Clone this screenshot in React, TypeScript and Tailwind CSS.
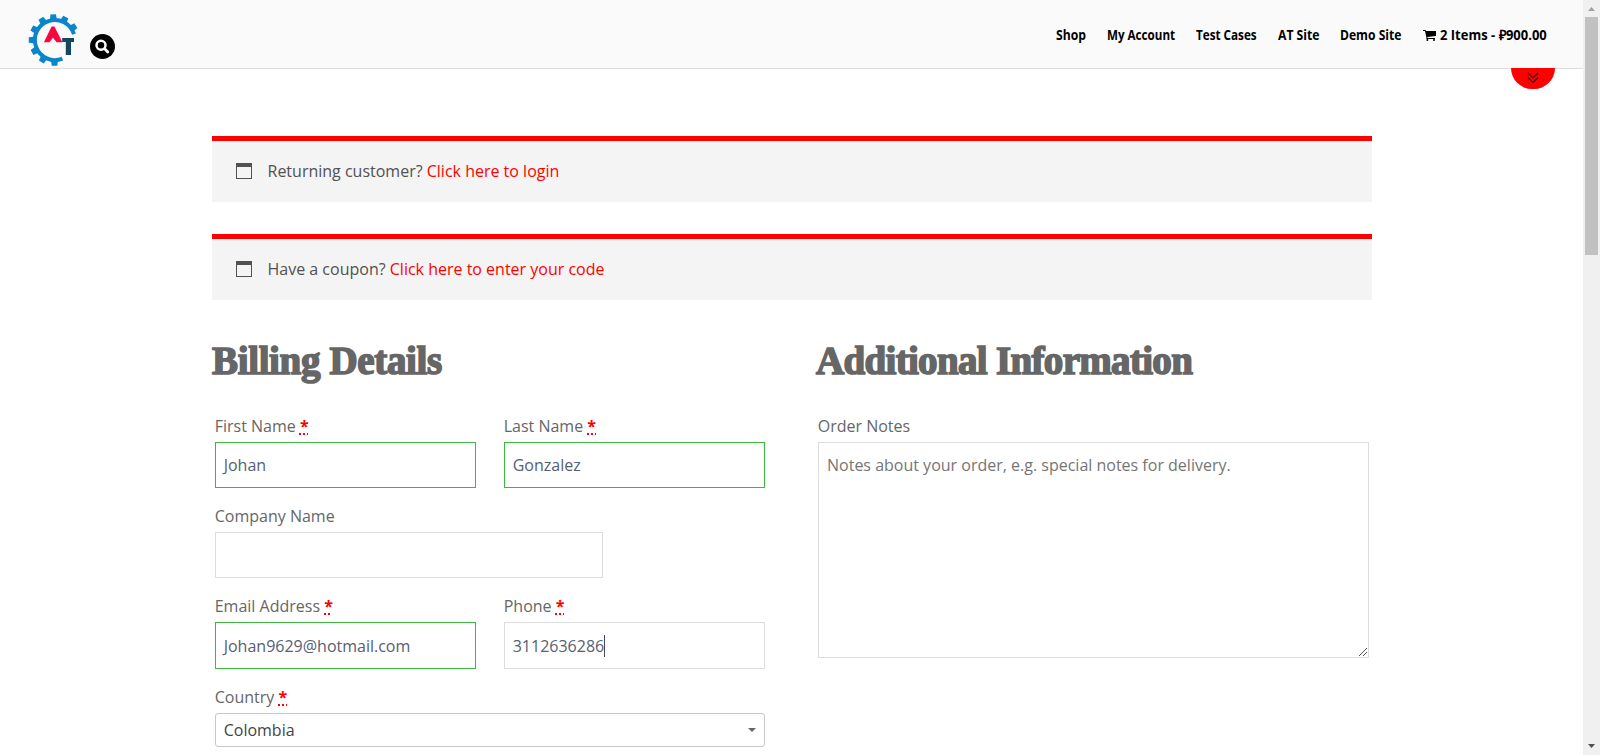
import type { ReactNode } from "react";

const teeth = [-93, -64, -34, 90, 121, 151, 180, 208, 238];

function Logo() {
  return (
    <svg className="h-[50px] w-[50px] shrink-0 overflow-visible" viewBox="0 0 50 50">
      <g fill="#0a85cb">
        {teeth.map((a) => (
          <path key={a} d="M44.5 21.4 L51.2 22.2 V27.8 L44.5 28.6 Z" transform={`rotate(${a} 25.5 25)`} />
        ))}
      </g>
      <path d="M45 19.2 A20 20 0 1 0 33.4 43.6" fill="none" stroke="#0a85cb" strokeWidth="4" />
      <path d="M22.6 11.5 H25.4 L33.4 27.3 H27.6 L24 22.8 L20.4 27.3 H14.9 Z" fill="#f8063f" />
      <path d="M33.2 23 H45 V27 H42 V40 H36.8 V27 H33.2 Z" fill="#12475f" />
    </svg>
  );
}

function NavItem({ box, scale = "scale-x-[0.87]", children }: { box: string; scale?: string; children: ReactNode }) {
  return (
    <a className={`block h-5 shrink-0 whitespace-nowrap ${box}`}>
      <span className={`inline-block origin-left ${scale}`}>{children}</span>
    </a>
  );
}

function Notice({ text, link }: { text: string; link: string }) {
  return (
    <div className="flex h-[66px] items-center border-t-[5px] border-[#ff0000] bg-[#f4f4f4] pb-0.5 pl-[23.5px] text-[#515151]">
      <svg className="mr-4 h-4 w-4 shrink-0" viewBox="0 0 16 16" shapeRendering="crispEdges">
        <path d="M0 0H16V16H0ZM1 4V15H15V4Z" fill="#515151" fillRule="evenodd" />
      </svg>
      <span>
        {text} <a className="text-[#ff0000]">{link}</a>
      </span>
    </div>
  );
}

function Label({ text, required }: { text: string; required?: boolean }) {
  return (
    <div className="-ml-[0.3px] mb-1 h-6 whitespace-nowrap leading-6">
      {text}
      {required && (
        <>
          {" "}
          <abbr className="font-bold text-[#ff0000] underline decoration-dotted decoration-2 underline-offset-auto">*</abbr>
        </>
      )}
    </div>
  );
}

function Field({ label, value, required, valid, caret, size = "h-[46px] w-[261px]" }: {
  label: string;
  value?: string;
  required?: boolean;
  valid?: boolean;
  caret?: boolean;
  size?: string;
}) {
  return (
    <div>
      <Label text={label} required={required} />
      <div className={`flex items-center border pl-[7.7px] text-[#566073] ${size} ${valid ? "border-[#3cb93c]" : "border-[#dddddd]"}`}>
        {value}
        {caret && <span className="h-[22px] w-px bg-[#3f4a5c]" />}
      </div>
    </div>
  );
}

const heading =
  "h-12 whitespace-nowrap font-['Liberation_Serif',serif] text-[39px] font-bold leading-[46px] text-[#666666] [-webkit-text-stroke:1.6px_#666666]";

export default function App() {
  return (
    <div className="flex h-[755px] w-[1600px] overflow-hidden bg-white font-['Open_Sans',sans-serif] text-base leading-6 text-[#666666]">
      <div className="relative flex w-[1583px] shrink-0 flex-col">
        <header className="flex h-[69px] shrink-0 border-b border-[#dedede] bg-[#fafafa] pl-[29px]">
          <div className="pt-[15px]">
            <Logo />
          </div>
          <div className="ml-[11px] mt-[34px] flex h-[25px] w-[25px] items-center justify-center rounded-full bg-black">
            <svg className="h-[15px] w-[15px]" viewBox="0 0 15 15" fill="none" stroke="#fff">
              <circle cx="6" cy="6.2" r="4.5" strokeWidth="2.5" />
              <path d="M9.6 9.8 L12.8 13" strokeWidth="2.8" strokeLinecap="round" />
            </svg>
          </div>
          <nav className="ml-auto mt-[25px] flex w-[527px] text-sm font-bold leading-5 text-black">
            <NavItem box="w-[51px]">Shop</NavItem>
            <NavItem box="w-[88.5px]" scale="scale-x-[0.83]">My Account</NavItem>
            <NavItem box="w-[82px]" scale="scale-x-[0.835]">Test Cases</NavItem>
            <NavItem box="w-[62.5px]">AT Site</NavItem>
            <NavItem box="w-[83px]" scale="scale-x-[0.865]">Demo Site</NavItem>
            <svg className="mr-[3.5px] mt-[5px] h-[11px] w-[13px] shrink-0" viewBox="0 0 13 11">
              <path d="M0 0H2.6L3 1H13V6L4.4 7V8H12V9H3.4V7.4L2 1H0Z" fill="#000" />
              <circle cx="4.4" cy="10" r="1" />
              <circle cx="11" cy="10" r="1" />
            </svg>
            <NavItem box="w-[110px]" scale="scale-x-[0.927]">2 Items - ₽900.00</NavItem>
          </nav>
        </header>
        <div className="absolute left-[1511px] top-[68px] flex h-[21px] w-11 justify-center rounded-b-full bg-[#ff0000] pt-1">
          <svg className="h-3 w-3" viewBox="0 0 12 12" fill="none" stroke="#3a0000" strokeWidth="1.1">
            <path d="M1 1 L6 6 L11 1 M1 5.5 L6 10.5 L11 5.5" />
          </svg>
        </div>

        <main className="ml-[212px] mt-[67px] w-[1160px]">
          <div className="flex flex-col gap-8">
            <Notice text="Returning customer?" link="Click here to login" />
            <Notice text="Have a coupon?" link="Click here to enter your code" />
          </div>
          <div className="mt-[38px] flex">
            <section className="w-[604px]">
              <h2 className={`${heading} tracking-[-0.35px]`}>Billing Details</h2>
              <div className="ml-[3px] mt-7 w-[550px]">
                <div className="flex h-[90px] justify-between">
                  <Field label="First Name" value="Johan" required valid />
                  <Field label="Last Name" value="Gonzalez" required valid />
                </div>
                <div className="h-[90px]">
                  <Field label="Company Name" size="h-[46px] w-[388px]" />
                </div>
                <div className="flex h-[91px] justify-between">
                  <Field label="Email Address" value="Johan9629@hotmail.com" required valid size="h-[47px] w-[261px]" />
                  <Field label="Phone" value="3112636286" required caret size="h-[47px] w-[261px]" />
                </div>
                <Label text="Country" required />
                <div className="flex h-[34px] items-center justify-between rounded-[3px] border border-[#c8c8c8] pl-[7.7px] pr-2 text-[#444444]">
                  Colombia
                  <svg className="h-1 w-2" viewBox="0 0 8 4">
                    <path d="M0 0H8L4 4Z" fill="#666" />
                  </svg>
                </div>
              </div>
            </section>
            <section>
              <h2 className={`${heading} tracking-[-0.68px]`}>Additional Information</h2>
              <div className="ml-0.5 mt-7">
                <Label text="Order Notes" />
                <div className="flex h-[216px] w-[551px] flex-col justify-between border border-[#dddddd] pl-2 pt-[10px] text-[#757575]">
                  <span>Notes about your order, e.g. special notes for delivery.</span>
                  <svg className="mb-px mr-px h-2 w-2 self-end" viewBox="0 0 8 8" stroke="#555" strokeWidth="1">
                    <path d="M0 8 L8 0 M4 8 L8 4" />
                  </svg>
                </div>
              </div>
            </section>
          </div>
        </main>
      </div>

      <div className="flex w-[17px] shrink-0 flex-col items-center bg-[#f0f0f0]">
        <div className="flex h-[17px] shrink-0 items-center">
          <svg className="h-1 w-[7px]" viewBox="0 0 7 4">
            <path d="M0 4H7L3.5 0Z" fill="#a0a0a0" />
          </svg>
        </div>
        <div className="h-[238px] w-[13px] shrink-0 bg-[#c1c1c1]" />
        <div className="mb-[7px] mt-auto">
          <svg className="h-1 w-[7px]" viewBox="0 0 7 4">
            <path d="M0 0H7L3.5 4Z" fill="#505050" />
          </svg>
        </div>
      </div>
    </div>
  );
}
